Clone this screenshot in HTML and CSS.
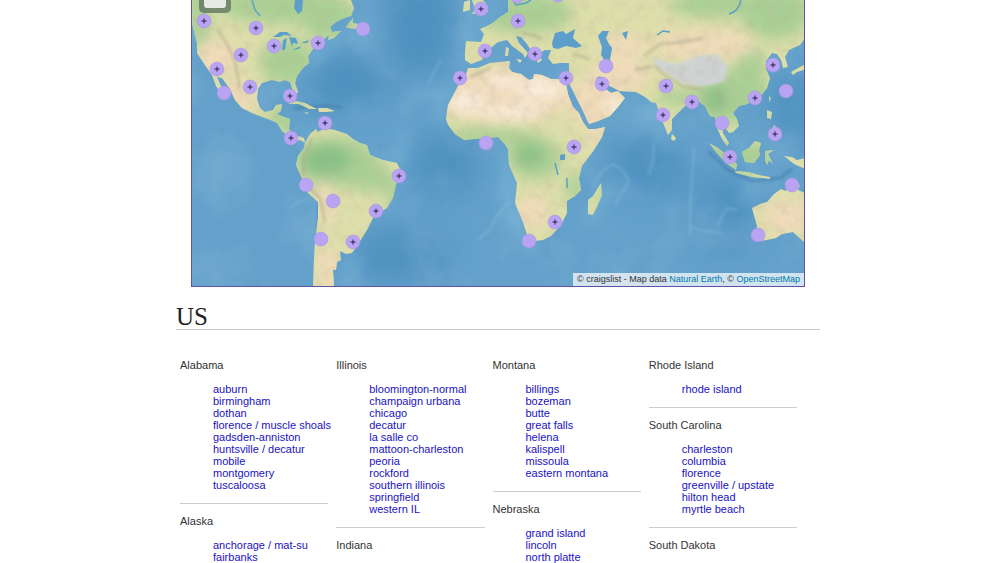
FILE: index.html
```html
<!DOCTYPE html>
<html lang="en">
<head>
  <meta charset="UTF-8" />
  <title>craigslist: sites</title>
  <link rel="stylesheet" href="styles.css">
</head>
<body>
  <!-- Map -->
  <div class="map">
    <svg class="world" viewBox="192 0 612 286" role="img" aria-label="Map of sites">
      <defs>
        <filter id="soft" x="-50%" y="-50%" width="200%" height="200%"><feGaussianBlur stdDeviation="7" /></filter>
        <filter id="softer" x="-50%" y="-50%" width="200%" height="200%"><feGaussianBlur stdDeviation="16" /></filter>
        <filter id="fine" x="-20%" y="-20%" width="140%" height="140%"><feGaussianBlur stdDeviation="1.5" /></filter>
        <filter id="relief" x="0" y="0" width="100%" height="100%">
          <feTurbulence type="fractalNoise" baseFrequency="0.09" numOctaves="4" seed="7" />
          <feColorMatrix values="0 0 0 0 0.5  0 0 0 0 0.43  0 0 0 0 0.32  1.6 0 0 0 -0.72" />
        </filter>
        <filter id="seabed" x="0" y="0" width="100%" height="100%">
          <feTurbulence type="fractalNoise" baseFrequency="0.02" numOctaves="5" seed="4" />
          <feColorMatrix values="0 0 0 0 0.72  0 0 0 0 0.87  0 0 0 0 0.94  1.8 0 0 0 -0.78" />
        </filter>
        <clipPath id="land">
          <!-- North America -->
          <path d="M190 0V17L193 27 197 43 197 53 205 65 212 75 216 86 223 97 226 96 220 84 217 77 222 78 230 89 235 100 242 108 252 113 262 117 268 119 277 123 282 131 287 135 293 141 300 140 305 143 304 138 298 136 293 135 289 129 290 119 281 116 277 114 281 111 282 104 276 105 273 110 265 112 260 108 257 99 258 89 262 83 272 80 280 82 284 80 290 82 293 91 296 95 298 92 295 83 297 76 303 68 309 63 308 56 313 49 319 44 324 39 329 35 328 40 334 38 341 31 332 32 330 27 336 22 344 18 351 16 354 8 351 0Z" />
          <path d="M346 27 353 18 353 23 358 24 357 29 348 28Z" />
          <path d="M288 104 296 101 305 103 313 107 317 109 309 109 299 104ZM318 108 327 108 335 111 327 112 319 112ZM304 112 309 113 307 114Z" />
          <!-- South America -->
          <path d="M305 143 310 134 316 129 318 132 325 128 335 130 347 134 353 139 360 143 367 145 370 155 383 160 397 163 402 173 396 184 393 198 387 208 374 216 367 230 357 246 352 253 346 254 340 251 341 260 337 262 336 270 333 270 334 286H313L314 258 315 242 318 218 318 202 308 193 300 174 296 165 298 156 304 148Z" />
          <!-- Africa -->
          <path d="M468 68 478 68 490 63 500 62 510 61 509 68 512 72 521 74 529 80 533 79 534 74 542 75 551 79 560 79 566 83 568 94 573 107 579 113 583 122 588 129 596 129 605 127 602 137 594 150 582 166 579 178 581 190 575 196 567 201 567 213 561 225 551 236 543 240 535 241 528 238 523 222 515 203 517 183 509 165 508 149 504 143 498 137 485 138 474 139 464 140 455 134 448 125 446 119 448 105 455 92 460 82 466 75Z" />
          <path d="M601 183 602 195 597 207 593 215 588 214 588 200 593 196Z" />
          <!-- Europe and Asia -->
          <path d="M508 0 508 12 500 17 494 22 487 26 480 29 484 34 481 42 466 41 465 52 465 60 471 64 482 60 485 53 492 47 498 42 507 40 512 46 523 54 525 58 528 53 519 43 516 36 521 37 527 44 533 54 538 63 542 60 538 54 545 50 551 50 548 58 553 64 560 63 569 63 569 71 567 79 573 91 583 111 589 124 598 121 610 116 618 107 625 98 618 91 611 93 603 87 596 78 600 76 608 85 620 91 636 92 645 97 651 102 656 103 661 118 668 135 672 130 672 119 683 108 690 102 698 101 705 106 710 116 715 117 717 128 722 139 727 146 729 143 723 133 723 124 729 133 733 132 739 126 737 119 733 113 739 106 747 104 759 98 767 88 770 78 766 69 766 61 772 53 777 54 781 60 783 68 788 67 785 57 789 50 800 45 805 38V0Z" />
          <path d="M472 0 475 9 472 14 488 12 487 5 483 0ZM463 12 464 2 470 0 470 10Z" />
          <path d="M506 47 509 48 508 56 505 56ZM516 59 522 60 520 63Z" />
          <path d="M791 72 800 67 806 64V69L797 72 793 75Z" />
          <path d="M672 134 676 138 674 141 671 139ZM769 96 771 98 769 102ZM767 110 772 112 771 119 767 118ZM774 125 779 130 777 137 771 136Z" />
          <!-- Indonesia -->
          <path d="M709 143 718 148 728 156 737 164 736 170 726 163 717 153ZM735 171 748 172 759 175 770 177 770 179 752 177 736 173ZM742 152 749 148 755 141 761 143 759 150 760 155 754 163 745 162ZM765 151 774 150 768 154 773 164 769 160 767 165 765 160ZM784 156 792 157 797 160 805 158V169L794 164Z" />
          <!-- Australia -->
          <path d="M752 208 760 204 767 202 774 194 781 189 786 191 790 184 800 185 798 190 805 193V243L793 232 782 234 776 238 767 240 759 241 756 237 757 226Z" />
        </clipPath>
        <g id="site">
          <circle class="dot" r="7" />
        </g>
        <g id="sites">
          <circle class="dot" r="7" />
          <path class="plus" d="M-2.5 0H2.5M0 -2.5V2.5" />
        </g>
      </defs>

      <!-- Ocean -->
      <rect class="sea" x="190" width="616" height="287" />
      <g class="deep" filter="url(#softer)">
        <ellipse cx="345" cy="82" rx="48" ry="28" />
        <ellipse cx="420" cy="20" rx="36" ry="60" />
        <ellipse cx="445" cy="165" rx="35" ry="32" />
        <ellipse cx="400" cy="255" rx="50" ry="26" />
        <ellipse cx="650" cy="165" rx="40" ry="30" />
        <ellipse cx="727" cy="213" rx="32" ry="38" />
        <ellipse cx="795" cy="110" rx="24" ry="38" />
      </g>
      <g class="shallow" filter="url(#soft)">
        <path d="M302 60 335 40 370 28M405 130 400 165M442 85 440 125M506 150 508 210 535 252M585 225 612 185M650 100 665 148M735 135 755 170 744 205M460 35 474 30M357 255 343 285" />
      </g>
      <rect x="190" width="616" height="287" filter="url(#seabed)" opacity="0.15" />
      <g class="ridge" filter="url(#fine)">
        <path d="M478 240 485 234 491 229 496 216 504 208 511 201M592 186 603 171 613 164 624 172 629 181 622 193 615 204M694 146 692 180 690 215 690 236M691 227 704 231 722 233M717 226 727 208 738 210M654 144 653 160 649 175M290 208 299 202 308 198M428 84 434 72 441 60" />
      </g>
      <path class="trench" filter="url(#fine)" d="M319 204V235M708 151 728 170 752 181 780 178 792 169M294 108 325 106 342 107" />

      <!-- Land -->
      <g clip-path="url(#land)">
        <rect class="ground" x="190" width="616" height="287" />
        <g class="green" filter="url(#soft)">
          <ellipse cx="288" cy="62" rx="28" ry="24" />
          <ellipse cx="285" cy="6" rx="65" ry="18" />
          <ellipse cx="330" cy="20" rx="28" ry="22" />
          <ellipse cx="199" cy="18" rx="12" ry="35" />
          <ellipse cx="289" cy="118" rx="22" ry="15" />
          <ellipse cx="338" cy="162" rx="43" ry="25" />
          <ellipse cx="370" cy="178" rx="22" ry="14" />
          <ellipse cx="395" cy="195" rx="8" ry="22" />
          <ellipse cx="525" cy="13" rx="48" ry="20" />
          <ellipse cx="490" cy="137" rx="48" ry="9" />
          <ellipse cx="535" cy="158" rx="27" ry="21" />
          <ellipse cx="575" cy="188" rx="9" ry="16" />
          <ellipse cx="735" cy="97" rx="37" ry="27" />
          <ellipse cx="680" cy="98" rx="25" ry="8" />
          <ellipse cx="750" cy="68" rx="16" ry="22" />
          <ellipse cx="715" cy="4" rx="45" ry="14" />
          <ellipse cx="775" cy="12" rx="35" ry="28" />
          <ellipse cx="740" cy="158" rx="38" ry="17" />
          <ellipse cx="602" cy="198" rx="4" ry="16" />
        </g>
        <g class="forest" filter="url(#soft)">
          <ellipse cx="326" cy="160" rx="24" ry="14" />
          <ellipse cx="529" cy="155" rx="14" ry="10" />
          <ellipse cx="715" cy="100" rx="10" ry="14" />
        </g>
        <g class="sand" filter="url(#soft)">
          <ellipse cx="217" cy="57" rx="22" ry="19" />
          <ellipse cx="240" cy="95" rx="15" ry="18" />
          <ellipse cx="505" cy="94" rx="70" ry="27" />
          <ellipse cx="595" cy="103" rx="26" ry="25" />
          <ellipse cx="620" cy="75" rx="30" ry="18" />
          <ellipse cx="624" cy="45" rx="26" ry="12" />
          <ellipse cx="705" cy="45" rx="52" ry="15" />
          <ellipse cx="532" cy="212" rx="17" ry="16" />
          <ellipse cx="329" cy="270" rx="10" ry="26" />
          <ellipse cx="326" cy="205" rx="8" ry="24" />
          <ellipse cx="787" cy="217" rx="24" ry="18" />
          <ellipse cx="598" cy="135" rx="10" ry="13" />
        </g>
        <g class="dune" filter="url(#soft)">
          <ellipse cx="467" cy="102" rx="16" ry="11" />
          <ellipse cx="512" cy="112" rx="32" ry="6" />
          <ellipse cx="541" cy="89" rx="24" ry="10" />
          <ellipse cx="503" cy="82" rx="18" ry="6" />
          <ellipse cx="615" cy="105" rx="10" ry="9" />
        </g>
        <path class="plateau" filter="url(#fine)" d="M654 57 666 62 678 64 697 56 716 54 728 66 726 80 713 85 698 86 686 84 673 78 663 70 654 65Z" />
        <path class="range" filter="url(#fine)" d="M644 56 660 44 684 42 703 38M655 66 666 76 684 87 702 89M635 70 652 66M306 185 320 198 325 222M312 138 304 158 303 176M470 77 490 68M218 30 228 46 235 62 240 88M573 54 590 59M717 90 722 104M522 33 533 35 542 39" />
        <rect x="190" width="616" height="287" filter="url(#relief)" opacity="0.35" />
      </g>

      <!-- Lakes and inland seas -->
      <g class="water">
        <path d="M552 43 555 33 563 31 566 34 575 29 573 38 582 46 576 48 566 46 558 49 553 48Z" />
        <path d="M598 36 602 31 609 31 606 38 609 44 612 48 610 60 605 61 601 55 602 47Z" />
        <path d="M273 37 280 32 287 32 292 36 284 35 280 37ZM283 40 287 38 285 50 282 50ZM289 37 296 38 298 44 293 43 292 47ZM292 50 301 46 299 49ZM301 43 309 40 307 43Z" />
        <path d="M295 0H303L302 11 298 14 294 8ZM622 33 628 31 626 40ZM560 155 565 154 565 160 560 160Z" />
      </g>
      <path class="stream" d="M252 0 255 10 260 16M555 163 558 175M567 178 567 188M657 35 663 31 670 32M741 0Q739 11 729 14M513 0 516 5 526 3 531 0" />

      <!-- Sites -->
      <use href="#sites" x="204" y="21" />
      <use href="#sites" x="256" y="28" />
      <use href="#sites" x="241" y="55" />
      <use href="#sites" x="274" y="46" />
      <use href="#sites" x="318" y="43" />
      <use href="#sites" x="217" y="69" />
      <use href="#sites" x="250" y="87" />
      <use href="#sites" x="290" y="96" />
      <use href="#sites" x="325" y="123" />
      <use href="#sites" x="291" y="138" />
      <use href="#sites" x="399" y="176" />
      <use href="#sites" x="376" y="211" />
      <use href="#sites" x="353" y="242" />
      <use href="#sites" x="481" y="9" />
      <use href="#sites" x="518" y="21" />
      <use href="#sites" x="485" y="51" />
      <use href="#sites" x="535" y="54" />
      <use href="#sites" x="460" y="78" />
      <use href="#sites" x="566" y="78" />
      <use href="#sites" x="602" y="84" />
      <use href="#sites" x="574" y="147" />
      <use href="#sites" x="555" y="222" />
      <use href="#sites" x="666" y="86" />
      <use href="#sites" x="692" y="102" />
      <use href="#sites" x="663" y="115" />
      <use href="#sites" x="773" y="65" />
      <use href="#sites" x="755" y="98" />
      <use href="#sites" x="775" y="134" />
      <use href="#sites" x="730" y="157" />
      <use href="#site" x="363" y="29" />
      <use href="#site" x="224" y="93" />
      <use href="#site" x="306" y="185" />
      <use href="#site" x="333" y="201" />
      <use href="#site" x="321" y="239" />
      <use href="#site" x="486" y="143" />
      <use href="#site" x="529" y="241" />
      <use href="#site" x="606" y="66" />
      <use href="#site" x="786" y="91" />
      <use href="#site" x="722" y="123" />
      <use href="#site" x="792" y="185" />
      <use href="#site" x="758" y="235" />
      <use href="#site" x="517" y="-4" />
      <use href="#site" x="558" y="-5" />
    </svg>
    <div class="zoom"><button type="button" aria-label="Zoom out"></button></div>
    <div class="credit">© craigslist - Map data <a href="#">Natural Earth</a>, © <a href="#">OpenStreetMap</a></div>
  </div>

  <h1>US</h1>

  <div class="columns">
    <div class="column">
      <section class="state">
        <h4>Alabama</h4>
        <ul>
          <li><a href="#">auburn</a></li>
          <li><a href="#">birmingham</a></li>
          <li><a href="#">dothan</a></li>
          <li><a href="#">florence / muscle shoals</a></li>
          <li><a href="#">gadsden-anniston</a></li>
          <li><a href="#">huntsville / decatur</a></li>
          <li><a href="#">mobile</a></li>
          <li><a href="#">montgomery</a></li>
          <li><a href="#">tuscaloosa</a></li>
        </ul>
      </section>
      <section class="state">
        <h4>Alaska</h4>
        <ul>
          <li><a href="#">anchorage / mat-su</a></li>
          <li><a href="#">fairbanks</a></li>
        </ul>
      </section>
    </div>

    <div class="column">
      <section class="state">
        <h4>Illinois</h4>
        <ul>
          <li><a href="#">bloomington-normal</a></li>
          <li><a href="#">champaign urbana</a></li>
          <li><a href="#">chicago</a></li>
          <li><a href="#">decatur</a></li>
          <li><a href="#">la salle co</a></li>
          <li><a href="#">mattoon-charleston</a></li>
          <li><a href="#">peoria</a></li>
          <li><a href="#">rockford</a></li>
          <li><a href="#">southern illinois</a></li>
          <li><a href="#">springfield</a></li>
          <li><a href="#">western IL</a></li>
        </ul>
      </section>
      <section class="state">
        <h4>Indiana</h4>
      </section>
    </div>

    <div class="column">
      <section class="state">
        <h4>Montana</h4>
        <ul>
          <li><a href="#">billings</a></li>
          <li><a href="#">bozeman</a></li>
          <li><a href="#">butte</a></li>
          <li><a href="#">great falls</a></li>
          <li><a href="#">helena</a></li>
          <li><a href="#">kalispell</a></li>
          <li><a href="#">missoula</a></li>
          <li><a href="#">eastern montana</a></li>
        </ul>
      </section>
      <section class="state">
        <h4>Nebraska</h4>
        <ul>
          <li><a href="#">grand island</a></li>
          <li><a href="#">lincoln</a></li>
          <li><a href="#">north platte</a></li>
        </ul>
      </section>
    </div>

    <div class="column">
      <section class="state">
        <h4>Rhode Island</h4>
        <ul>
          <li><a href="#">rhode island</a></li>
        </ul>
      </section>
      <section class="state">
        <h4>South Carolina</h4>
        <ul>
          <li><a href="#">charleston</a></li>
          <li><a href="#">columbia</a></li>
          <li><a href="#">florence</a></li>
          <li><a href="#">greenville / upstate</a></li>
          <li><a href="#">hilton head</a></li>
          <li><a href="#">myrtle beach</a></li>
        </ul>
      </section>
      <section class="state">
        <h4>South Dakota</h4>
      </section>
    </div>
  </div>
</body>
</html>
```

FILE: styles.css
```css
body {
  margin: 0;
  padding: 0 18% 0 17.6%;
  background: #fff;
  color: #333;
  font-family: "Liberation Sans", Arial, sans-serif;
  font-size: 11px;
  line-height: 12px;
}

a {
  color: #2012c4;
  text-decoration: none;
}

a:hover {
  text-decoration: underline;
}

/* Map */
.map {
  position: relative;
  margin: 0 15px;
  border: 1px solid #6350a4;
  border-top: 0;
  overflow: hidden;
}

.world {
  display: block;
  width: 100%;
  height: auto;
}

.sea { fill: #64a1ca; }
.deep { fill: #4387b9; opacity: 0.65; }
.shallow { fill: none; stroke: #83bddb; stroke-width: 10; opacity: 0.45; }
.ridge { fill: none; stroke: #9acce4; stroke-width: 2; opacity: 0.35; }
.trench { fill: none; stroke: #34699c; stroke-width: 2; opacity: 0.6; }
.ground { fill: #dddfab; }
.green { fill: #a2cd92; opacity: 0.85; }
.forest { fill: #7fbd82; opacity: 0.8; }
.sand { fill: #f1dabb; opacity: 0.9; }
.dune { fill: #fcf1e4; opacity: 0.9; }
.plateau { fill: #cfd3d3; }
.range { fill: none; stroke: #a9a48b; stroke-width: 2; opacity: 0.7; }
.water { fill: #5d9fca; }
.stream { fill: none; stroke: #5d9fca; stroke-width: 1.5; }
.dot { fill: #b9a4f3; stroke: #a792dc; stroke-width: 0.5; }
.plus { stroke: #2b1b4d; stroke-width: 1; }

.zoom {
  position: absolute;
  top: 0;
  left: 7px;
  padding: 0 5px 5px;
  border-radius: 0 0 5px 5px;
  background: rgba(85, 105, 85, 0.7);
}

.zoom button {
  display: block;
  width: 22px;
  height: 8px;
  padding: 0;
  border: 0;
  border-radius: 0 0 3px 3px;
  background: #e6e9e6;
}

.credit {
  position: absolute;
  right: 0;
  bottom: 0;
  padding: 0 4px 1px;
  background: rgba(255, 255, 255, 0.7);
  font-size: 9px;
}

.credit a {
  color: #0078a8;
}

/* Sites by state */
h1 {
  margin: 18px 0 29px;
  border-bottom: 1px solid #ccc;
  color: #222;
  font-family: "Liberation Serif", "Times New Roman", serif;
  font-size: 25px;
  font-weight: normal;
  line-height: 24px;
}

.columns {
  display: grid;
  grid-template-columns: repeat(4, minmax(0, 1fr));
  gap: 8px;
  padding: 0 23px 0 4px;
}

.state {
  margin-bottom: 11px;
  padding-bottom: 12px;
  border-bottom: 1px solid #ccc;
}

.state:last-child {
  margin-bottom: 0;
  padding-bottom: 0;
  border-bottom: 0;
}

h4 {
  margin: 0 0 12px;
  font-size: 11px;
  font-weight: normal;
}

ul {
  margin: 0;
  padding: 0 0 0 33px;
  list-style: none;
  white-space: nowrap;
}
```
